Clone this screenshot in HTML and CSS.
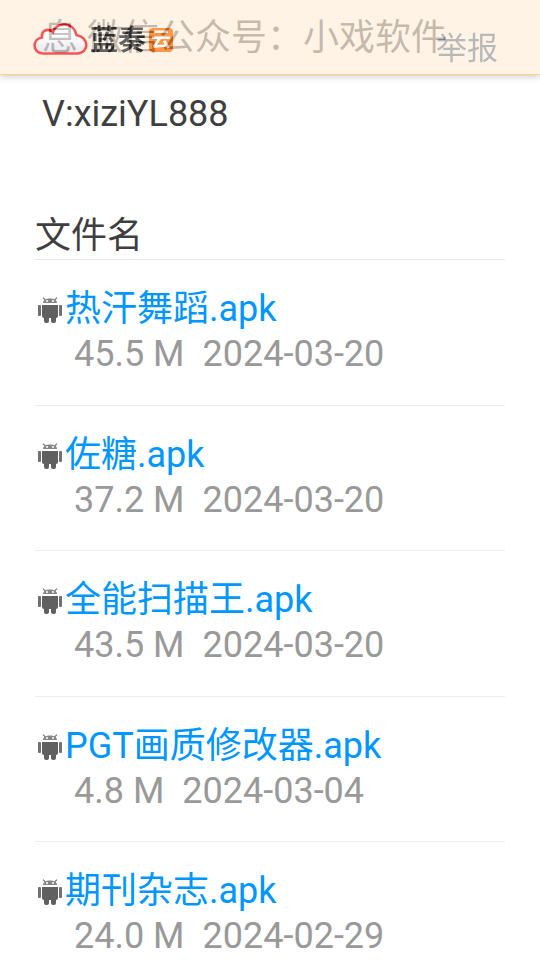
FILE: index.html
```
<!DOCTYPE html>
<html lang="zh-CN">
<head>
<meta charset="utf-8">
<meta name="viewport" content="width=device-width, initial-scale=1">
<title>文件分享</title>
<link rel="stylesheet" href="styles.css">
</head>
<body>
<svg class="sprite" aria-hidden="true">
  <symbol id="android" viewBox="0 0 24 26">
    <path d="M5 0.6L7.4 3M19 0.6L16.6 3" stroke="#777" stroke-width="1.2"/>
    <path d="M5 6C5 3.5 7.5 1.6 12 1.6S19 3.5 19 6z" fill="#858585"/>
    <path d="M8 4h2M14 4h2" stroke="#fff" stroke-width="1.4"/>
    <path d="M4 8h16v11q0 2-2 2v3q0 2-2 2h-1q-2 0-2-2v-3h-2v3q0 2-2 2h-1q-2 0-2-2v-3q-2 0-2-2z" fill="#606060"/>
    <rect x="0" y="8" width="3" height="11" rx="1" fill="#707070"/>
    <rect x="21" y="8" width="3" height="11" rx="1" fill="#707070"/>
  </symbol>
</svg>
<header class="topbar">
  <a class="brand" href="#" aria-label="蓝奏云">
    <svg class="cloud" viewBox="0 0 56 34" aria-hidden="true">
      <defs><linearGradient id="fill" x2="0" y2="1"><stop offset=".4" stop-color="#fff"/><stop offset="1" stop-color="#dcdce4"/></linearGradient></defs>
      <path d="M10 31.5C-1 31-1 17 9 15.500C8 8 15 6 20 10C24-1 41 0 43.500 13C56 15 57 31 44 31.500Z" fill="url(#fill)" stroke="#f4100c" stroke-width="2.600"/>
    </svg>
    <span class="name">蓝奏</span><span class="tile">云</span>
  </a>
  <a class="report" href="#">举报</a>
</header>
<main class="page">
  <p class="notice">息 微信公众号：小戏软件<br>V:xiziYL888</p>
  <h1 class="heading">文件名</h1>
  <ul class="files">
    <li class="file"><a class="link" href="#"><svg class="icon" aria-hidden="true"><use href="#android"/></svg>热汗舞蹈.apk</a><p class="meta"><span>45.5 M</span><span>2024-03-20</span></p></li>
    <li class="file"><a class="link" href="#"><svg class="icon" aria-hidden="true"><use href="#android"/></svg>佐糖.apk</a><p class="meta"><span>37.2 M</span><span>2024-03-20</span></p></li>
    <li class="file"><a class="link" href="#"><svg class="icon" aria-hidden="true"><use href="#android"/></svg>全能扫描王.apk</a><p class="meta"><span>43.5 M</span><span>2024-03-20</span></p></li>
    <li class="file"><a class="link" href="#"><svg class="icon" aria-hidden="true"><use href="#android"/></svg>PGT画质修改器.apk</a><p class="meta"><span>4.8 M</span><span>2024-03-04</span></p></li>
    <li class="file"><a class="link" href="#"><svg class="icon" aria-hidden="true"><use href="#android"/></svg>期刊杂志.apk</a><p class="meta"><span>24.0 M</span><span>2024-02-29</span></p></li>
  </ul>
</main>
</body>
</html>
```
FILE: styles.css
```
* { box-sizing: border-box; }
body {
  margin: 0;
  background: #fff;
  color: #3f3f3f;
  font-family: Roboto, "Noto Sans CJK SC", sans-serif;
  font-size: 36px;
  line-height: 45px;
}
a { text-decoration: none; }
.sprite { display: none; }
.topbar {
  position: fixed;
  top: 0;
  left: 0;
  right: 0;
  z-index: 1;
  display: flex;
  justify-content: space-between;
  align-items: center;
  height: 75px;
  padding: 0 42px 0 33px;
  background: #ffeedc;
  border-bottom: 1px solid #ffc34d;
  box-shadow: 0 1px 8px rgba(0, 0, 0, .35);
  opacity: .7;
}
.brand {
  display: flex;
  align-items: center;
  padding-top: 4px;
  color: #222;
  font-size: 28px;
  font-weight: 700;
  line-height: 32px;
}
.cloud { width: 56px; height: 34px; margin-right: 1px; }
.name { padding-top: 4px; }
.tile {
  width: 24px;
  height: 24px;
  margin: 1px 0 0 3px;
  border-radius: 4px;
  background: #ff6a00;
  color: #fff;
  font-size: 20px;
  line-height: 24px;
  text-align: center;
}
.report {
  padding-top: 23px;
  color: #999b9d;
  font-size: 31px;
}
.page { padding: 0 35px; }
.notice {
  margin: 0;
  padding-left: 7px;
  line-height: 76px;
}
.heading {
  margin: 0;
  padding-top: 61px;
  border-bottom: 1px solid #e8e8e8;
  font-size: 36px;
  font-weight: 400;
  line-height: 46px;
}
.files {
  display: grid;
  grid-auto-rows: 146px 145px;
  margin: 0;
  padding: 0;
  list-style: none;
}
.file {
  padding-top: 27px;
  border-bottom: 1px solid #ececec;
}
.link {
  display: flex;
  align-items: center;
  color: #0096ff;
}
.icon { width: 24px; height: 26px; margin: 0 3px 0; }
.meta {
  display: flex;
  gap: 18px;
  margin: 0;
  padding-left: 39px;
  color: #999;
}
```
